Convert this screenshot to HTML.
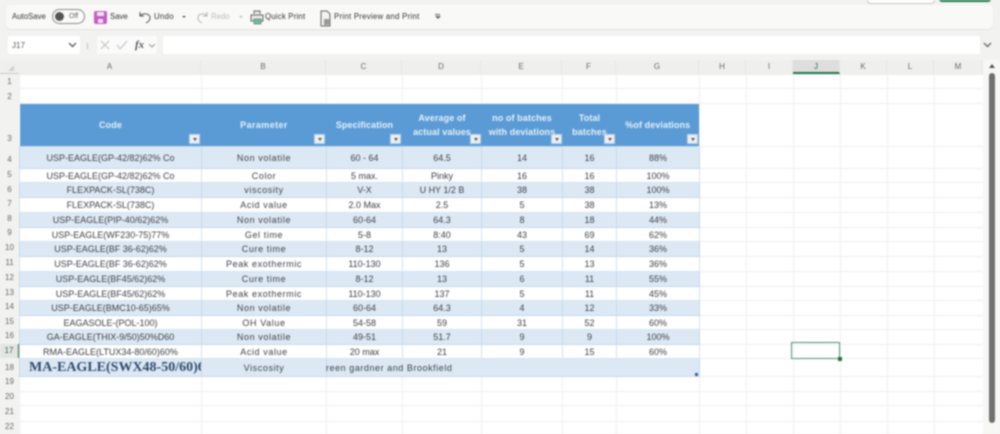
<!DOCTYPE html>
<html><head><meta charset="utf-8">
<style>
html,body{margin:0;padding:0;width:1000px;height:434px;overflow:hidden;background:#f2f2f0;font-family:"Liberation Sans",sans-serif;color:#3a3a3a}
.a{position:absolute}
#root{position:absolute;left:0;top:0;width:1000px;height:434px;overflow:hidden;filter:blur(.7px)}
.tb{font-size:7.8px;color:#333;white-space:nowrap;line-height:10px}
.colh{position:absolute;top:60px;height:14px;line-height:14px;text-align:center;font-size:8px;color:#666;background:#efefed;border-right:1px solid #e6e6e4;box-sizing:border-box}
.rowh{position:absolute;left:0;width:19px;text-align:center;font-size:8px;color:#666;box-sizing:border-box}
table{position:absolute;left:19px;top:74px;border-collapse:collapse;table-layout:fixed;width:964px;background:#fff}
td{padding:0;border:1px solid #eeeef2;font-size:9px;text-align:center;color:#3c3f46;white-space:nowrap;overflow:hidden;line-height:10px}
td:nth-child(2).d{letter-spacing:.6px}
tr.h td{background:#5b9bd5;color:#e6f0f8;font-weight:bold;border:none;font-size:9px;line-height:14px;vertical-align:middle;position:relative;letter-spacing:.1px}
tr.b td.d{background:#dce9f4;border-color:#c6d9ea}
tr.w td.d{background:#fff;border-color:#d3e2f0}
.f{position:absolute;width:11px;height:10px;background:#eef0f2;border:1px solid #b8cfe4;box-sizing:border-box}
.f:after{content:"";position:absolute;left:2.5px;top:3px;border-left:2px solid transparent;border-right:2px solid transparent;border-top:3px solid #555}
</style></head><body>
<div id="root">
<!-- toolbar -->
<div class="a" style="left:6px;top:5px;width:987px;height:24px;background:#f9f9f8;border-radius:5px;box-shadow:0 1px 1px #e2e2e0"></div>
<div class="a" style="left:867px;top:-4px;width:66px;height:6px;background:#fff;border:1px solid #c8c8c8;border-radius:4px"></div>
<div class="a" style="left:939px;top:-4px;width:52px;height:6px;background:#1e7a4c;border-radius:3px"></div>
<div class="a tb" style="left:12px;top:12px">AutoSave</div>
<div class="a" style="left:52px;top:9px;width:33px;height:15px;border:1px solid #888;border-radius:9px;box-sizing:border-box;background:#fbfbfb"></div>
<div class="a" style="left:55px;top:12px;width:9px;height:9px;border-radius:50%;background:#555"></div>
<div class="a tb" style="left:69px;top:12px;font-size:7px;color:#666">Off</div>
<div class="a" style="left:94px;top:11px;width:13px;height:13px;background:#c45cc8;border-radius:2px"></div>
<div class="a" style="left:97px;top:12px;width:7px;height:4px;background:#f2e2f3"></div>
<div class="a" style="left:98px;top:19px;width:5px;height:4px;background:#f2e2f3"></div>
<div class="a tb" style="left:110px;top:12px">Save</div>
<svg class="a" style="left:138px;top:10px" width="15" height="15" viewBox="0 0 15 15" fill="none" stroke="#555" stroke-width="1"><path d="M2 2v4h4M2 6c2-3 9-3 10 1 .6 3-2 5-4 6"/></svg>
<div class="a tb" style="left:154px;top:12px;letter-spacing:.3px">Undo</div>
<div class="a" style="left:182px;top:16px;border-left:2px solid transparent;border-right:2px solid transparent;border-top:2px solid #555"></div>
<svg class="a" style="left:195px;top:10px" width="15" height="15" viewBox="0 0 15 15" fill="none" stroke="#b5b5b5" stroke-width="1"><path d="M12 2v4H8M12 6C10 3 4 3 3 7c-.6 3 2 5 4 6"/></svg>
<div class="a tb" style="left:211px;top:12px;color:#bbb">Redo</div>
<div class="a" style="left:239px;top:16px;border-left:2px solid transparent;border-right:2px solid transparent;border-top:2px solid #bbb"></div>
<svg class="a" style="left:250px;top:10px" width="14" height="16" viewBox="0 0 14 16"><path d="M4 4V1h6v3M1 5h12v6H1z" fill="#e8e8e8" stroke="#666" stroke-width="1"/><rect x="4" y="9" width="7" height="5" fill="#6cbf9e" stroke="#666" stroke-width=".6"/></svg>
<div class="a tb" style="left:265px;top:12px;letter-spacing:.2px">Quick Print</div>
<svg class="a" style="left:320px;top:10px" width="12" height="17" viewBox="0 0 12 17"><path d="M1 1h6l3 3v12H1z" fill="#f2f2f2" stroke="#666" stroke-width="1"/><rect x="4" y="9" width="6" height="6" fill="#999"/></svg>
<div class="a tb" style="left:334px;top:12px;letter-spacing:.27px">Print Preview and Print</div>
<div class="a" style="left:435px;top:14px;width:5px;height:1px;background:#666"></div>
<div class="a" style="left:435px;top:16px;border-left:3px solid transparent;border-right:3px solid transparent;border-top:3px solid #666"></div>

<!-- formula bar -->
<div class="a" style="left:8px;top:36px;width:72px;height:18px;background:#fff;border-radius:2px"></div>
<div class="a tb" style="left:12px;top:41px;font-size:8px;color:#555">J17</div>
<svg class="a" style="left:67px;top:41px" width="11" height="8" viewBox="0 0 11 8" fill="none" stroke="#444" stroke-width="1.2"><path d="M2 2l3.500 3.500L9 2"/></svg>
<div class="a" style="left:87px;top:43px;width:1px;height:6px;background:#c4c4c4"></div>
<div class="a" style="left:97px;top:36px;width:60px;height:18px;background:#fbfbfb;border-radius:2px"></div>
<svg class="a" style="left:99px;top:40px" width="36" height="11" viewBox="0 0 36 11" fill="none" stroke="#c2c2c2" stroke-width="1.100"><path d="M2 1l8 8M10 1l-8 8M18 5l3 4 7-8"/></svg>
<div class="a" style="left:135px;top:39px;font:italic bold 11px 'Liberation Serif',serif;color:#555">fx</div>
<svg class="a" style="left:148px;top:43px" width="8" height="5" viewBox="0 0 8 5" fill="none" stroke="#999" stroke-width="1"><path d="M1 1l3 3 3-3"/></svg>
<div class="a" style="left:163px;top:36px;width:817px;height:18px;background:#fff;border-radius:2px"></div>
<svg class="a" style="left:982px;top:41px" width="11" height="8" viewBox="0 0 11 8" fill="none" stroke="#555" stroke-width="1.200"><path d="M2 2l3.500 3.500L9 2"/></svg>

<!-- column heads -->
<div class="a" style="left:0;top:60px;width:983px;height:14px;background:#efefed;border-bottom:1px solid #c9c9c9;box-sizing:border-box"></div>
<div class="a" style="left:8px;top:65px;border-bottom:6px solid #d0d0d0;border-left:6px solid transparent"></div>
<div class="colh" style="left:19px;width:182px">A</div>
<div class="colh" style="left:201px;width:125px">B</div>
<div class="colh" style="left:326px;width:76px">C</div>
<div class="colh" style="left:402px;width:79px">D</div>
<div class="colh" style="left:481px;width:81px">E</div>
<div class="colh" style="left:562px;width:54px">F</div>
<div class="colh" style="left:616px;width:83px">G</div>
<div class="colh" style="left:699px;width:47px">H</div>
<div class="colh" style="left:746px;width:47px">I</div>
<div class="colh" style="left:793px;width:47px;background:#dedede;color:#2b6b4a;border-bottom:2px solid #217346">J</div>
<div class="colh" style="left:840px;width:47px">K</div>
<div class="colh" style="left:887px;width:47px">L</div>
<div class="colh" style="left:934px;width:49px">M</div>

<!-- row heads -->
<div class="rowh" style="top:75px;height:14px;line-height:14px">1</div>
<div class="rowh" style="top:90px;height:14px;line-height:14px">2</div>
<div class="rowh" style="top:132px;height:14px;line-height:14px">3</div>
<div class="rowh" style="top:153px;height:14px;line-height:14px">4</div>
<div class="rowh" style="top:168px;height:14px;line-height:14px">5</div>
<div class="rowh" style="top:183px;height:14px;line-height:14px">6</div>
<div class="rowh" style="top:197px;height:14px;line-height:14px">7</div>
<div class="rowh" style="top:212px;height:14px;line-height:14px">8</div>
<div class="rowh" style="top:226px;height:14px;line-height:14px">9</div>
<div class="rowh" style="top:241px;height:14px;line-height:14px">10</div>
<div class="rowh" style="top:256px;height:14px;line-height:14px">11</div>
<div class="rowh" style="top:271px;height:14px;line-height:14px">12</div>
<div class="rowh" style="top:286px;height:14px;line-height:14px">13</div>
<div class="rowh" style="top:300px;height:14px;line-height:14px">14</div>
<div class="rowh" style="top:315px;height:14px;line-height:14px">15</div>
<div class="rowh" style="top:329px;height:14px;line-height:14px">16</div>
<div class="rowh" style="top:344px;height:14px;line-height:14px;background:#e4e4e4;color:#2b6b4a;border-right:1px solid #217346">17</div>
<div class="rowh" style="top:361px;height:14px;line-height:14px">18</div>
<div class="rowh" style="top:375px;height:14px;line-height:14px">19</div>
<div class="rowh" style="top:390px;height:14px;line-height:14px">20</div>
<div class="rowh" style="top:405px;height:14px;line-height:14px">21</div>
<div class="rowh" style="top:420px;height:14px;line-height:14px">22</div>

<table>
<colgroup><col style="width:182px"><col style="width:125px"><col style="width:76px"><col style="width:79px"><col style="width:81px"><col style="width:54px"><col style="width:83px"><col style="width:47px"><col style="width:47px"><col style="width:47px"><col style="width:47px"><col style="width:47px"><col style="width:49px"></colgroup>
<tr style="height:14px"><td></td><td></td><td></td><td></td><td></td><td></td><td></td><td></td><td></td><td></td><td></td><td></td><td></td></tr>
<tr style="height:15px"><td></td><td></td><td></td><td></td><td></td><td></td><td></td><td></td><td></td><td></td><td></td><td></td><td></td></tr>
<tr class="h" style="height:43px"><td>Code</td><td style="letter-spacing:.4px">Parameter</td><td>Specification</td><td>Average of<br>actual values</td><td>no of batches<br>with deviations</td><td>Total<br>batches</td><td>%of deviations</td><td style="background:#fff;border:1px solid #eeeef2"></td><td style="background:#fff;border:1px solid #eeeef2"></td><td style="background:#fff;border:1px solid #eeeef2"></td><td style="background:#fff;border:1px solid #eeeef2"></td><td style="background:#fff;border:1px solid #eeeef2"></td><td style="background:#fff;border:1px solid #eeeef2"></td></tr>
<tr class="b" style="height:22px"><td class="d">USP-EAGLE(GP-42/82)62% Co</td><td class="d">Non volatile</td><td class="d">60 - 64</td><td class="d">64.5</td><td class="d">14</td><td class="d">16</td><td class="d">88%</td><td></td><td></td><td></td><td></td><td></td><td></td></tr>
<tr class="w" style="height:14px"><td class="d">USP-EAGLE(GP-42/82)62% Co</td><td class="d">Color</td><td class="d">5 max.</td><td class="d">Pinky</td><td class="d">16</td><td class="d">16</td><td class="d">100%</td><td></td><td></td><td></td><td></td><td></td><td></td></tr>
<tr class="b" style="height:15px"><td class="d">FLEXPACK-SL(738C)</td><td class="d">viscosity</td><td class="d">V-X</td><td class="d">U HY 1/2 B</td><td class="d">38</td><td class="d">38</td><td class="d">100%</td><td></td><td></td><td></td><td></td><td></td><td></td></tr>
<tr class="w" style="height:15px"><td class="d">FLEXPACK-SL(738C)</td><td class="d">Acid value</td><td class="d">2.0 Max</td><td class="d">2.5</td><td class="d">5</td><td class="d">38</td><td class="d">13%</td><td></td><td></td><td></td><td></td><td></td><td></td></tr>
<tr class="b" style="height:15px"><td class="d">USP-EAGLE(PIP-40/62)62%</td><td class="d">Non volatile</td><td class="d">60-64</td><td class="d">64.3</td><td class="d">8</td><td class="d">18</td><td class="d">44%</td><td></td><td></td><td></td><td></td><td></td><td></td></tr>
<tr class="w" style="height:14px"><td class="d">USP-EAGLE(WF230-75)77%</td><td class="d">Gel time</td><td class="d">5-8</td><td class="d">8:40</td><td class="d">43</td><td class="d">69</td><td class="d">62%</td><td></td><td></td><td></td><td></td><td></td><td></td></tr>
<tr class="b" style="height:15px"><td class="d">USP-EAGLE(BF 36-62)62%</td><td class="d">Cure time</td><td class="d">8-12</td><td class="d">13</td><td class="d">5</td><td class="d">14</td><td class="d">36%</td><td></td><td></td><td></td><td></td><td></td><td></td></tr>
<tr class="w" style="height:15px"><td class="d">USP-EAGLE(BF 36-62)62%</td><td class="d">Peak exothermic</td><td class="d">110-130</td><td class="d">136</td><td class="d">5</td><td class="d">13</td><td class="d">36%</td><td></td><td></td><td></td><td></td><td></td><td></td></tr>
<tr class="b" style="height:15px"><td class="d">USP-EAGLE(BF45/62)62%</td><td class="d">Cure time</td><td class="d">8-12</td><td class="d">13</td><td class="d">6</td><td class="d">11</td><td class="d">55%</td><td></td><td></td><td></td><td></td><td></td><td></td></tr>
<tr class="w" style="height:14px"><td class="d">USP-EAGLE(BF45/62)62%</td><td class="d">Peak exothermic</td><td class="d">110-130</td><td class="d">137</td><td class="d">5</td><td class="d">11</td><td class="d">45%</td><td></td><td></td><td></td><td></td><td></td><td></td></tr>
<tr class="b" style="height:15px"><td class="d">USP-EAGLE(BMC10-65)65%</td><td class="d">Non volatile</td><td class="d">60-64</td><td class="d">64.3</td><td class="d">4</td><td class="d">12</td><td class="d">33%</td><td></td><td></td><td></td><td></td><td></td><td></td></tr>
<tr class="w" style="height:14px"><td class="d">EAGASOLE-(POL-100)</td><td class="d">OH Value</td><td class="d">54-58</td><td class="d">59</td><td class="d">31</td><td class="d">52</td><td class="d">60%</td><td></td><td></td><td></td><td></td><td></td><td></td></tr>
<tr class="b" style="height:15px"><td class="d">GA-EAGLE(THIX-9/50)50%D60</td><td class="d">Non volatile</td><td class="d">49-51</td><td class="d">51.7</td><td class="d">9</td><td class="d">9</td><td class="d">100%</td><td></td><td></td><td></td><td></td><td></td><td></td></tr>
<tr class="w" style="height:14px"><td class="d">RMA-EAGLE(LTUX34-80/60)60%</td><td class="d">Acid value</td><td class="d">20 max</td><td class="d">21</td><td class="d">9</td><td class="d">15</td><td class="d">60%</td><td></td><td></td><td></td><td></td><td></td><td></td></tr>
<tr class="b" style="height:18px"><td class="d" style="text-align:left;padding-left:9px;font:bold 14px 'Liberation Serif',serif;color:#2d4a6e;overflow:hidden">MA-EAGLE(SWX48-50/60)60%</td><td class="d">Viscosity</td><td class="d" style="border-right:none"></td><td class="d" style="border-left:none;border-right:none"></td><td class="d" style="border-left:none;border-right:none"></td><td class="d" style="border-left:none;border-right:none"></td><td class="d" style="border-left:none"></td><td></td><td></td><td></td><td></td><td></td><td></td></tr>
<tr style="height:15px"><td></td><td></td><td></td><td></td><td></td><td></td><td></td><td></td><td></td><td></td><td></td><td></td><td></td></tr>
<tr style="height:14px"><td></td><td></td><td></td><td></td><td></td><td></td><td></td><td></td><td></td><td></td><td></td><td></td><td></td></tr>
<tr style="height:16px"><td></td><td></td><td></td><td></td><td></td><td></td><td></td><td></td><td></td><td></td><td></td><td></td><td></td></tr>
<tr style="height:14px"><td></td><td></td><td></td><td></td><td></td><td></td><td></td><td></td><td></td><td></td><td></td><td></td><td></td></tr>
</table>

<!-- C18 overflow text -->
<div class="a" style="left:326px;top:358px;width:140px;height:18px;overflow:hidden;font-size:9px;letter-spacing:.55px;line-height:20px;color:#3c3f46;white-space:nowrap">reen gardner and Brookfield</div>

<!-- filter buttons -->
<div class="f" style="left:189px;top:134px"></div>
<div class="f" style="left:314px;top:134px"></div>
<div class="f" style="left:390px;top:134px"></div>
<div class="f" style="left:470px;top:134px"></div>
<div class="f" style="left:551px;top:134px"></div>
<div class="f" style="left:604px;top:134px"></div>
<div class="f" style="left:687px;top:134px"></div>

<div class="a" style="left:695px;top:373px;width:3px;height:3px;background:#3a5fa8"></div>

<!-- selection -->
<div class="a" style="left:791px;top:342px;width:49px;height:17px;border:1.500px solid #4f8f70;box-sizing:border-box"></div>
<div class="a" style="left:838px;top:357px;width:4px;height:4px;background:#217346"></div>

<!-- scrollbar -->
<div class="a" style="left:983px;top:60px;width:17px;height:374px;background:#f7f7f6"></div>
<div class="a" style="left:989px;top:64px;border-left:3px solid transparent;border-right:3px solid transparent;border-bottom:4px solid #555"></div>
<div class="a" style="left:989px;top:73px;width:6px;height:350px;background:#6f6f6f;border-radius:3px"></div>
</div>
</body></html>
